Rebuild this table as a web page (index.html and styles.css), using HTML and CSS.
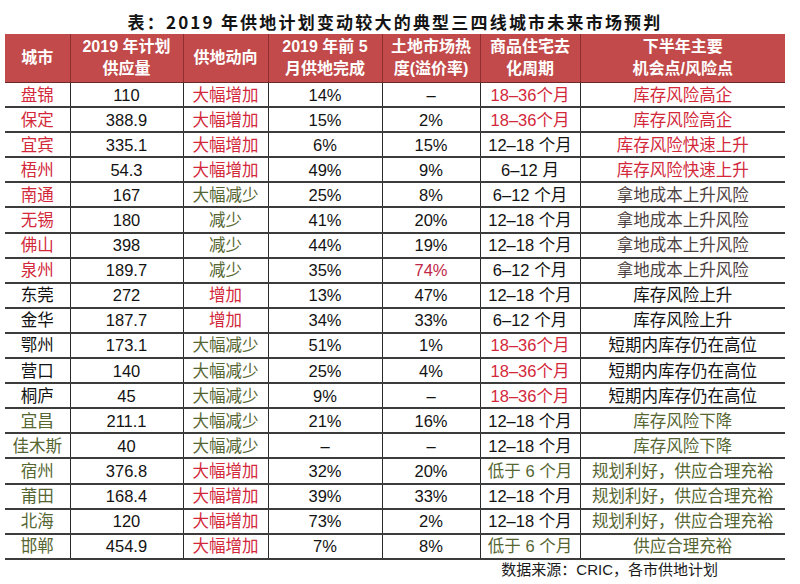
FILE: index.html
```html
<!DOCTYPE html>
<html lang="zh">
<head>
<meta charset="utf-8">
<link rel="stylesheet" href="styles.css">
</head>
<body>
<div class="page">
  <h1 class="title">表：2019 年供地计划变动较大的典型三四线城市未来市场预判</h1>
  <table class="grid">
    <colgroup>
      <col class="c1"><col class="c2"><col class="c3"><col class="c4"><col class="c5"><col class="c6"><col class="c7">
    </colgroup>
    <thead>
      <tr>
        <th>城市</th>
        <th>2019 年计划<br>供应量</th>
        <th>供地动向</th>
        <th>2019 年前 5<br>月供地完成</th>
        <th>土地市场热<br>度(溢价率)</th>
        <th>商品住宅去<br>化周期</th>
        <th>下半年主要<br>机会点/风险点</th>
      </tr>
    </thead>
    <tbody>
      <tr><td class="r">盘锦</td><td>110</td><td class="r">大幅增加</td><td>14%</td><td>–</td><td class="r">18–36个月</td><td class="r">库存风险高企</td></tr>
      <tr><td class="r">保定</td><td>388.9</td><td class="r">大幅增加</td><td>15%</td><td>2%</td><td class="r">18–36个月</td><td class="r">库存风险高企</td></tr>
      <tr><td class="r">宜宾</td><td>335.1</td><td class="r">大幅增加</td><td>6%</td><td>15%</td><td>12–18 个月</td><td class="r">库存风险快速上升</td></tr>
      <tr><td class="r">梧州</td><td>54.3</td><td class="r">大幅增加</td><td>49%</td><td>9%</td><td>6–12 月</td><td class="r">库存风险快速上升</td></tr>
      <tr><td class="r">南通</td><td>167</td><td class="o">大幅减少</td><td>25%</td><td>8%</td><td>6–12 个月</td><td class="g">拿地成本上升风险</td></tr>
      <tr><td class="r">无锡</td><td>180</td><td class="o">减少</td><td>41%</td><td>20%</td><td>12–18 个月</td><td class="g">拿地成本上升风险</td></tr>
      <tr><td class="r">佛山</td><td>398</td><td class="o">减少</td><td>44%</td><td>19%</td><td>12–18 个月</td><td class="g">拿地成本上升风险</td></tr>
      <tr><td class="r">泉州</td><td>189.7</td><td class="o">减少</td><td>35%</td><td class="p">74%</td><td>6–12 个月</td><td class="g">拿地成本上升风险</td></tr>
      <tr><td>东莞</td><td>272</td><td class="r">增加</td><td>13%</td><td>47%</td><td>12–18 个月</td><td>库存风险上升</td></tr>
      <tr><td>金华</td><td>187.7</td><td class="r">增加</td><td>34%</td><td>33%</td><td>6–12 个月</td><td>库存风险上升</td></tr>
      <tr><td>鄂州</td><td>173.1</td><td class="o">大幅减少</td><td>51%</td><td>1%</td><td class="r">18–36个月</td><td>短期内库存仍在高位</td></tr>
      <tr><td>营口</td><td>140</td><td class="o">大幅减少</td><td>25%</td><td>4%</td><td class="r">18–36个月</td><td>短期内库存仍在高位</td></tr>
      <tr><td>桐庐</td><td>45</td><td class="o">大幅减少</td><td>9%</td><td>–</td><td class="r">18–36个月</td><td>短期内库存仍在高位</td></tr>
      <tr><td class="o">宜昌</td><td>211.1</td><td class="o">大幅减少</td><td>21%</td><td>16%</td><td>12–18 个月</td><td class="o">库存风险下降</td></tr>
      <tr><td class="o">佳木斯</td><td>40</td><td class="o">大幅减少</td><td>–</td><td>–</td><td>12–18 个月</td><td class="o">库存风险下降</td></tr>
      <tr><td class="o">宿州</td><td>376.8</td><td class="r">大幅增加</td><td>32%</td><td>20%</td><td class="o">低于 6 个月</td><td class="o">规划利好，供应合理充裕</td></tr>
      <tr><td class="o">莆田</td><td>168.4</td><td class="r">大幅增加</td><td>39%</td><td>33%</td><td>12–18 个月</td><td class="o">规划利好，供应合理充裕</td></tr>
      <tr><td class="o">北海</td><td>120</td><td class="r">大幅增加</td><td>73%</td><td>2%</td><td>12–18 个月</td><td class="o">规划利好，供应合理充裕</td></tr>
      <tr><td class="o">邯郸</td><td>454.9</td><td class="r">大幅增加</td><td>7%</td><td>8%</td><td class="o">低于 6 个月</td><td class="o">供应合理充裕</td></tr>
    </tbody>
  </table>
  <p class="source">数据来源：CRIC，各市供地计划</p>
</div>
</body>
</html>
```

FILE: styles.css
```css
html, body {
  margin: 0;
  padding: 0;
  background: #ffffff;
}

.page {
  width: 800px;
  height: 584px;
  padding: 12px 15px 0 5px;
  box-sizing: border-box;
  font-family: "Liberation Sans", "Noto Sans CJK SC", sans-serif;
  color: #121212;
}

.title {
  margin: 0 0 2px 0;
  height: 20px;
  line-height: 20px;
  text-align: center;
  font-size: 17px;
  font-weight: bold;
  letter-spacing: 2.2px;
  color: #141414;
  font-family: "Noto Sans CJK SC", "Liberation Sans", sans-serif;
}

.grid {
  width: 780px;
  border-collapse: collapse;
  table-layout: fixed;
}

.c1 { width: 65px; }
.c2 { width: 113px; }
.c3 { width: 85px; }
.c4 { width: 114px; }
.c5 { width: 98px; }
.c6 { width: 100px; }
.c7 { width: 205px; }

.grid th {
  background: #c24a4a;
  color: #ffffff;
  font-size: 16px;
  font-weight: bold;
  line-height: 22px;
  height: 48px;
  padding: 0;
  text-align: center;
  border-left: 1px solid #8e2e2e;
  border-bottom: 1px solid #6a2a2a;
  font-family: "Liberation Sans", "Noto Sans CJK SC", sans-serif;
}

.grid th:first-child { border-left: none; }

.grid td {
  height: 23.1px;
  padding: 0;
  text-align: center;
  font-size: 16.5px;
  line-height: 20px;
  border-left: 1px solid #2a2a2a;
  border-bottom: 2px solid #3c3c3c;
  white-space: nowrap;
}

.grid td:first-child { border-left: none; }

.grid td.r { color: #d2283a; }
.grid td.o { color: #566632; }
.grid td.g { color: #4e4242; }
.grid td.p { color: #c02848; }

.source {
  margin: 1px 0 0 0;
  padding-right: 67px;
  text-align: right;
  font-size: 15px;
  line-height: 18px;
  color: #1a1a1a;
}
```
